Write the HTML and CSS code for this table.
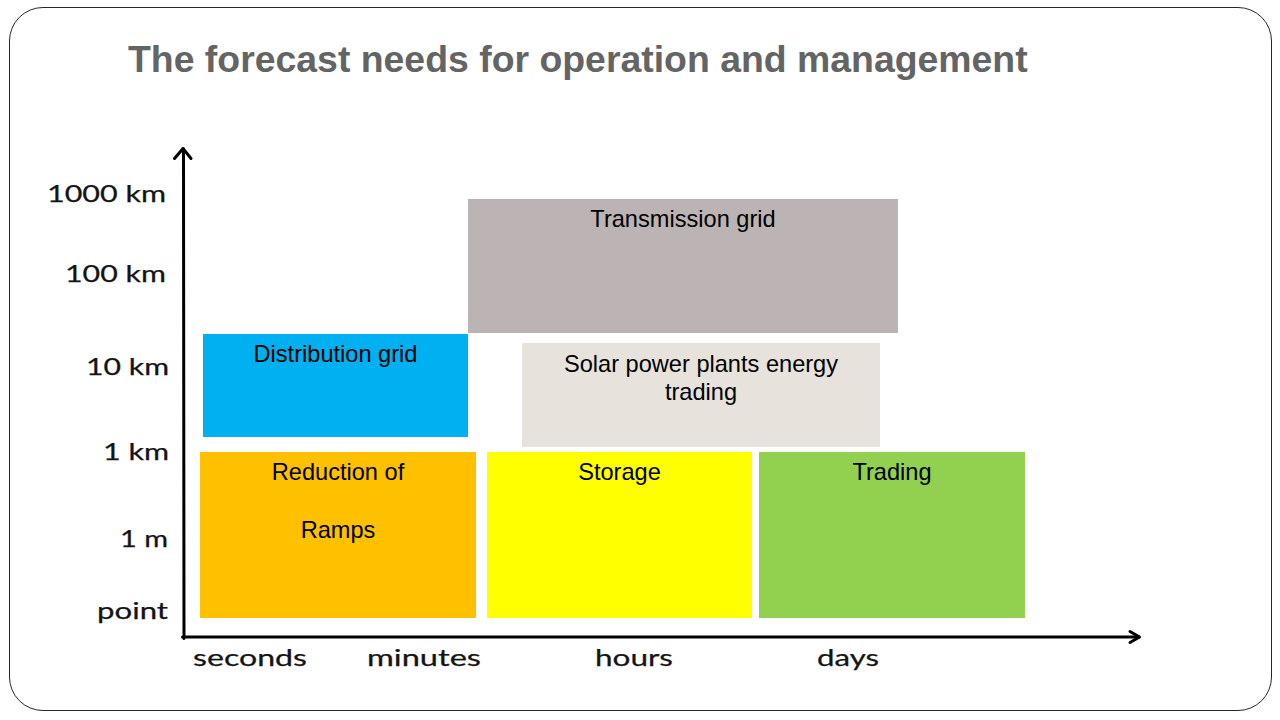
FILE: index.html
```html
<!DOCTYPE html>
<html lang="en">
<head>
<meta charset="utf-8">
<title>The forecast needs for operation and management</title>
<link rel="stylesheet" href="styles.css">
</head>
<body>
<div class="slide">
  <h1 class="title">The forecast needs for operation and management</h1>
  <div class="chart">
    <svg class="axes" width="1110" height="540" viewBox="0 0 1110 540" xmlns="http://www.w3.org/2000/svg">
      <g class="axis-lines">
        <line x1="143.5" y1="9" x2="144" y2="498.5"/>
        <polyline points="134.5,18.5 143,8.5 151,18.5"/>
        <line x1="142.5" y1="497" x2="1099" y2="497"/>
        <polyline points="1090,491.5 1099.5,497 1090,502.5"/>
      </g>
      <g class="ylabels">
        <text x="7" y="62" textLength="119" lengthAdjust="spacingAndGlyphs">1000 km</text>
        <text x="25" y="142" textLength="101" lengthAdjust="spacingAndGlyphs">100 km</text>
        <text x="46" y="235" textLength="83" lengthAdjust="spacingAndGlyphs">10 km</text>
        <text x="63" y="320" textLength="66" lengthAdjust="spacingAndGlyphs">1 km</text>
        <text x="80" y="407" textLength="48" lengthAdjust="spacingAndGlyphs">1 m</text>
        <text x="57" y="479" textLength="71" lengthAdjust="spacingAndGlyphs">point</text>
      </g>
      <g class="xlabels">
        <text x="153" y="526" textLength="114" lengthAdjust="spacingAndGlyphs">seconds</text>
        <text x="327" y="526" textLength="114" lengthAdjust="spacingAndGlyphs">minutes</text>
        <text x="555" y="526" textLength="78" lengthAdjust="spacingAndGlyphs">hours</text>
        <text x="777" y="526" textLength="62" lengthAdjust="spacingAndGlyphs">days</text>
      </g>
    </svg>
    <div class="box transmission"><p>Transmission grid</p></div>
    <div class="box distribution"><p>Distribution grid</p></div>
    <div class="box solar"><p>Solar power plants energy<br>trading</p></div>
    <div class="box reduction"><p>Reduction of</p><p class="gap">Ramps</p></div>
    <div class="box storage"><p>Storage</p></div>
    <div class="box trading"><p>Trading</p></div>
  </div>
</div>
</body>
</html>
```

FILE: styles.css
```css
html, body {
  margin: 0;
  padding: 0;
  background: #ffffff;
}

body {
  width: 1280px;
  height: 720px;
  overflow: hidden;
  font-family: "Liberation Sans", Arial, sans-serif;
}

.slide {
  box-sizing: border-box;
  width: 1263px;
  height: 704px;
  margin: 7px 0 0 9px;
  border: 1px solid #262626;
  border-radius: 34px;
  padding: 29px 0 0 0;
  background: #ffffff;
}

.title {
  margin: 0 0 0 118px;
  height: 44px;
  font-family: "Liberation Sans", Arial, sans-serif;
  font-weight: bold;
  font-size: 37.4px;
  line-height: 44px;
  color: #646464;
  white-space: nowrap;
}

.chart {
  position: relative;
  width: 1110px;
  height: 540px;
  margin: 59px 0 0 30px;
}

.axes {
  display: block;
}

.axis-lines line,
.axis-lines polyline {
  stroke: #000000;
  stroke-width: 3;
  fill: none;
  stroke-linecap: round;
  stroke-linejoin: round;
}

.ylabels text,
.xlabels text {
  font-family: Lato, "Open Sans", sans-serif;
  font-size: 24px;
  fill: #141414;
  stroke: #141414;
  stroke-width: 0.25;
}

.box {
  position: absolute;
  box-sizing: border-box;
  padding-top: 6px;
  text-align: center;
  font-family: "Liberation Sans", Arial, sans-serif;
  font-size: 23.6px;
  line-height: 28px;
  color: #000000;
}

.box p {
  margin: 0;
}

.box .gap {
  margin-top: 30px;
}

.transmission {
  left: 428px;
  top: 59px;
  width: 430px;
  height: 134px;
  background: #bcb4b4;
}

.distribution {
  left: 163px;
  top: 194px;
  width: 265px;
  height: 103px;
  background: #00b0f0;
}

.solar {
  left: 482px;
  top: 203px;
  width: 358px;
  height: 104px;
  background: #e7e3dc;
  padding-top: 7px;
  line-height: 28px;
}

.reduction {
  left: 160px;
  top: 312px;
  width: 276px;
  height: 166px;
  background: #ffc000;
}

.storage {
  left: 447px;
  top: 312px;
  width: 265px;
  height: 166px;
  background: #ffff00;
}

.trading {
  left: 719px;
  top: 312px;
  width: 266px;
  height: 166px;
  background: #92d050;
}
```
